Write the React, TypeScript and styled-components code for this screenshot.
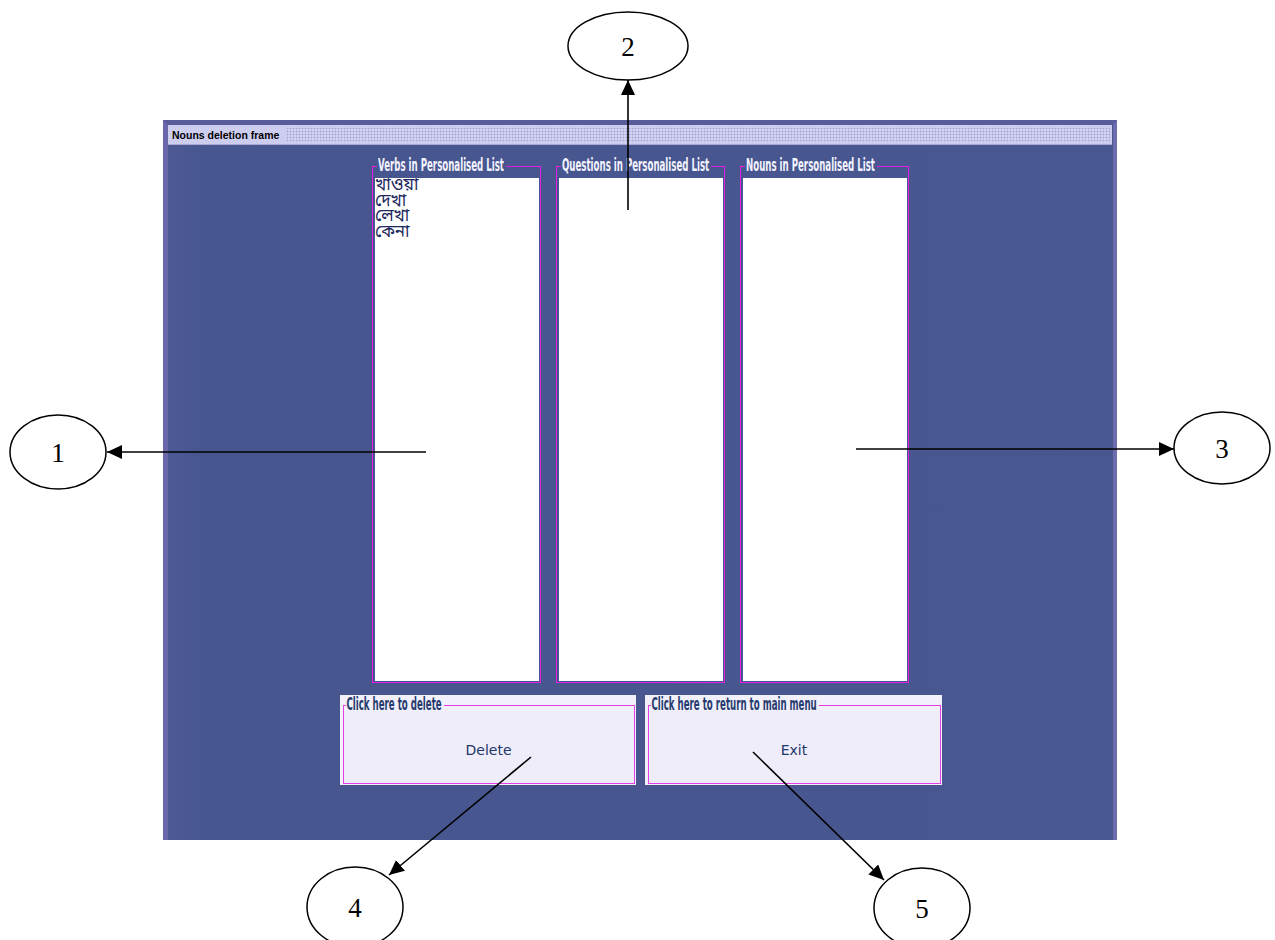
import React from "react";
import styled, { createGlobalStyle } from "styled-components";

const GlobalStyle = createGlobalStyle`
  html, body {
    margin: 0;
    padding: 0;
    background: #ffffff;
  }
  body {
    font-family: "Liberation Sans", Arial, sans-serif;
  }
`

const Page = styled.div`
  position: relative;
  width: 1275px;
  height: 940px;
  overflow: hidden;
  background: #ffffff;
  padding: 120px 0 0 163px;
  box-sizing: border-box;
`

const Frame = styled.div`
  width: 954px;
  height: 720px;
  box-sizing: border-box;
  display: flex;
  flex-direction: column;
  background: linear-gradient(90deg, #4d5995 0px, #47568f 40px, #485790 100%);
  border-top: 5px solid #5a5b9a;
  border-left: 5px solid #6a68a8;
  border-right: 4px solid #6d6dae;
`

const TitleBar = styled.div`
  height: 20px;
  display: flex;
  align-items: center;
  background: #cdcdf0;
  border-bottom: 1px solid #a9a9d6;
  box-sizing: border-box;
  margin-right: 1px;
`

const TitleText = styled.span`
  font: bold 10.5px "Liberation Sans", Arial, sans-serif;
  color: #000000;
  padding: 0 7px 0 4px;
  white-space: nowrap;
`

const Grip = styled.div`
  flex: 1;
  align-self: stretch;
  margin: 2px 2px 2px 0;
  background-color: #d3d3f3;
  background-image: radial-gradient(circle, #a2a2d3 0.75px, transparent 1.15px);
  background-size: 3px 3px;
`

const Body = styled.div`
  flex: 1;
  display: flex;
  flex-direction: column;
  align-items: center;
  padding-top: 15px;
`

const ListRow = styled.div`
  display: flex;
  gap: 15px;
`

const ListGroup = styled.fieldset`
  width: 169px;
  height: 523px;
  box-sizing: border-box;
  margin: 0;
  padding: 6px 1px 1px 2px;
  border: 1px solid #e01fe0;
  display: flex;
  flex-direction: column;
  min-inline-size: 0;
`

const Caption = styled.legend<{ $dark?: boolean }>`
  padding: 0 2px 0 1px;
  margin-left: 2px;
  height: 12px;
  font-family: "DejaVu Sans Condensed", "DejaVu Sans", sans-serif;
  font-stretch: condensed;
  font-weight: bold;
  font-size: 9.6px;
  line-height: 12px;
  color: ${p => (p.$dark ? "#263b6e" : "#f3f3ff")};
  white-space: nowrap;
`

const CaptionInk = styled.span`
  display: inline-block;
  transform: scaleY(1.75);
`

const List = styled.ul`
  flex: 1;
  margin: 0;
  padding: 0;
  list-style: none;
  background: #ffffff;
`

const Item = styled.li`
  font-family: "Noto Sans Bengali", "Lohit Bengali", "FreeSerif", "Noto Sans", sans-serif;
  font-size: 17px;
  line-height: 15.7px;
  color: #1b275c;
  white-space: nowrap;
`

const ActionRow = styled.div`
  display: flex;
  gap: 9px;
  margin-top: 12px;
`

const ActionPanel = styled.div<{ $w: number }>`
  width: ${p => p.$w}px;
  height: 90px;
  box-sizing: border-box;
  background: #f1f0fb;
  padding: 4px 1px 1px 3px;
  display: flex;
`

const ActionGroup = styled.fieldset`
  flex: 1;
  margin: 0;
  padding: 0;
  border: 1px solid #e63ee4;
  display: flex;
  min-inline-size: 0;
`

const ActionButton = styled.button`
  flex: 1;
  border: none;
  background: #eeedf9;
  font: 14px "DejaVu Sans", Verdana, sans-serif;
  color: #22366a;
  padding: 5px 0 0;
  cursor: pointer;
`

const Callouts = styled.svg`
  position: absolute;
  left: 0;
  top: 0;
  width: 1275px;
  height: 940px;
  pointer-events: none;
  overflow: visible;
`

const Label = styled.text`
  font-family: "Liberation Serif", "Times New Roman", serif;
  font-size: 27px;
  fill: #000000;
`

const lists = [
  { title: "Verbs in Personalised List", items: ["খাওয়া", "দেখা", "লেখা", "কেনা"] },
  { title: "Questions in Personalised List", items: [] as string[] },
  { title: "Nouns in Personalised List", items: [] as string[] },
];

const bubbles = [
  { n: "1", cx: 58, cy: 452, rx: 48, ry: 37 },
  { n: "2", cx: 628, cy: 46, rx: 60, ry: 34 },
  { n: "3", cx: 1222, cy: 448, rx: 48, ry: 36 },
  { n: "4", cx: 355, cy: 907, rx: 48, ry: 40 },
  { n: "5", cx: 922, cy: 908, rx: 48, ry: 40 },
];

const arrows = [
  { x1: 426, y1: 452, x2: 107, y2: 452 },
  { x1: 628, y1: 210, x2: 628, y2: 80 },
  { x1: 856, y1: 449, x2: 1174, y2: 449 },
  { x1: 531, y1: 757, x2: 389, y2: 875 },
  { x1: 753, y1: 752, x2: 884, y2: 880 },
];

export default function App() {
  return (
    <Page>
      <GlobalStyle />
      <Frame>
        <TitleBar>
          <TitleText>Nouns deletion frame</TitleText>
          <Grip />
        </TitleBar>
        <Body>
          <ListRow>
            {lists.map(l => (
              <ListGroup key={l.title}>
                <Caption>
                  <CaptionInk>{l.title}</CaptionInk>
                </Caption>
                <List>
                  {l.items.map(it => (
                    <Item key={it}>{it}</Item>
                  ))}
                </List>
              </ListGroup>
            ))}
          </ListRow>
          <ActionRow>
            <ActionPanel $w={296}>
              <ActionGroup>
                <Caption $dark>
                  <CaptionInk>Click here to delete</CaptionInk>
                </Caption>
                <ActionButton>Delete</ActionButton>
              </ActionGroup>
            </ActionPanel>
            <ActionPanel $w={297}>
              <ActionGroup>
                <Caption $dark>
                  <CaptionInk>Click here to return to main menu</CaptionInk>
                </Caption>
                <ActionButton>Exit</ActionButton>
              </ActionGroup>
            </ActionPanel>
          </ActionRow>
        </Body>
      </Frame>

      <Callouts viewBox="0 0 1275 940">
        <defs>
          <marker
            id="head"
            markerUnits="userSpaceOnUse"
            markerWidth="16"
            markerHeight="14"
            refX="15"
            refY="7"
            orient="auto"
          >
            <path d="M0,0 L15,7 L0,14 Z" fill="#000" />
          </marker>
        </defs>
        {arrows.map((a, i) => (
          <line
            key={i}
            x1={a.x1}
            y1={a.y1}
            x2={a.x2}
            y2={a.y2}
            stroke="#000"
            strokeWidth={1.6}
            markerEnd="url(#head)"
          />
        ))}
        {bubbles.map(b => (
          <g key={b.n}>
            <ellipse cx={b.cx} cy={b.cy} rx={b.rx} ry={b.ry} fill="#fff" stroke="#000" strokeWidth={1.5} />
            <Label x={b.cx} y={b.cy + 10} textAnchor="middle">
              {b.n}
            </Label>
          </g>
        ))}
      </Callouts>
    </Page>
  );
}
